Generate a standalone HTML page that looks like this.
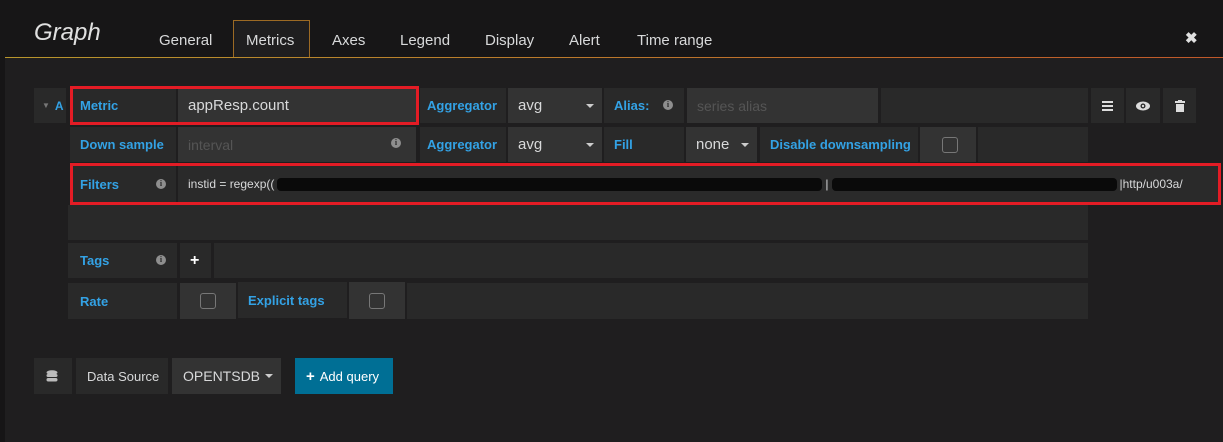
<!DOCTYPE html>
<html><head><style>
body{margin:0;width:1223px;height:442px;background:#161516;overflow:hidden;font-family:"Liberation Sans",sans-serif;position:relative}
.hd{position:absolute;left:0;top:0;width:1223px;height:57px;background:#171617}
.line{position:absolute;left:5px;top:57px;width:1218px;height:1px;background:linear-gradient(90deg,#b8962c,#c0582a)}
.body{position:absolute;left:5px;top:58px;width:1218px;height:384px;background:#1f1e1f}
.c{position:absolute;background:#292929;color:#d8d9da;font-size:14px;display:flex;align-items:center;box-sizing:border-box;padding-left:10px}
.l{color:#33a2e5;font-weight:bold;font-size:13px}
.in{background:#333}
.ph{color:#555}
.caret{position:absolute;right:8px;top:50%;margin-top:-2px;border-left:4px solid transparent;border-right:4px solid transparent;border-top:4px solid #ccc}
.info{position:absolute;width:10px;height:10px;border-radius:50%;background:#8e8e8e;color:#292929;font-size:8px;font-weight:bold;text-align:center;line-height:10px;font-family:"Liberation Serif",serif}
.cb{width:14px;height:14px;border:1px solid #777;border-radius:3px;margin-left:8px}
.red{position:absolute;border:3px solid #e31c25;box-sizing:border-box}
.tab{position:absolute;top:32px;color:#d8d9da;font-size:15px}
.rd{display:inline-block;height:13px;background:#0a0a0a;margin:0 3px;border-radius:4px}
</style></head><body>
<div class="hd"></div>
<div style="position:absolute;left:34px;top:19px;font-size:24px;font-style:italic;color:#e0e0e0">Graph</div>
<div style="position:absolute;left:233px;top:20px;width:77px;height:38px;border:1px solid #9c6a24;border-bottom:none;background:#1f1e1f;box-sizing:border-box"></div>
<div class="tab" style="left:159px">General</div>
<div class="tab" style="left:246px;top:32px">Metrics</div>
<div class="tab" style="left:332px">Axes</div>
<div class="tab" style="left:400px">Legend</div>
<div class="tab" style="left:485px">Display</div>
<div class="tab" style="left:569px">Alert</div>
<div class="tab" style="left:637px">Time range</div>
<div style="position:absolute;left:1185px;top:29px;color:#e0e0e0;font-size:15px;font-weight:bold">✖</div>
<div class="line"></div>
<div class="body"></div>

<div class="c" style="left:34px;top:88px;width:32px;height:35px;padding-left:8px;color:#33a2e5;font-weight:bold;font-size:12px"><span style="color:#777;font-size:8px;margin-right:5px">▼</span>A</div>
<div class="c l" style="left:70px;top:88px;width:106px;height:35px">Metric</div>
<div class="c in" style="left:178px;top:88px;width:238px;height:35px;font-size:15px">appResp.count</div>
<div class="c l" style="left:420px;top:88px;width:86px;height:35px;padding-left:7px">Aggregator</div>
<div class="c in" style="left:508px;top:88px;width:94px;height:35px;font-size:15px">avg<span class="caret"></span></div>
<div class="c l" style="left:604px;top:88px;width:80px;height:35px">Alias:<span class="info" style="left:59px;top:12px">i</span></div>
<div class="c in ph" style="left:687px;top:88px;width:191px;height:35px">series alias</div>
<div class="c" style="left:881px;top:88px;width:207px;height:35px"></div>
<div class="c" style="left:1091px;top:88px;width:33px;height:35px;padding-left:11px"><svg width="11" height="10"><rect y="0" width="11" height="2" fill="#ddd"/><rect y="4" width="11" height="2" fill="#ddd"/><rect y="8" width="11" height="2" fill="#ddd"/></svg></div>
<div class="c" style="left:1126px;top:88px;width:34px;height:35px;padding-left:10px"><svg width="14" height="10"><ellipse cx="7" cy="5" rx="7" ry="4.5" fill="#ddd"/><circle cx="7" cy="5" r="2.5" fill="#292929"/><circle cx="7" cy="5" r="1.2" fill="#ddd"/></svg></div>
<div class="c" style="left:1163px;top:88px;width:33px;height:35px;padding-left:12px"><svg width="10" height="12"><rect x="0" y="1" width="10" height="2" fill="#ddd"/><rect x="3" y="0" width="4" height="2" fill="#ddd"/><rect x="1" y="4" width="8" height="8" fill="#ddd"/></svg></div>
<div class="red" style="left:70px;top:86px;width:349px;height:39px"></div>

<div class="c l" style="left:70px;top:127px;width:106px;height:35px">Down sample</div>
<div class="c in ph" style="left:178px;top:127px;width:238px;height:35px">interval<span class="info" style="left:213px;top:11px">i</span></div>
<div class="c l" style="left:420px;top:127px;width:86px;height:35px;padding-left:7px">Aggregator</div>
<div class="c in" style="left:508px;top:127px;width:94px;height:35px;font-size:15px">avg<span class="caret"></span></div>
<div class="c l" style="left:604px;top:127px;width:80px;height:35px">Fill</div>
<div class="c in" style="left:686px;top:127px;width:71px;height:35px;font-size:15px">none<span class="caret"></span></div>
<div class="c l" style="left:760px;top:127px;width:158px;height:35px">Disable downsampling</div>
<div class="c in" style="left:920px;top:127px;width:56px;height:35px;padding-left:14px"><div class="cb" style="margin-left:8px"></div></div>
<div class="c" style="left:978px;top:127px;width:110px;height:35px"></div>

<div class="c l" style="left:70px;top:166px;width:106px;height:36px">Filters<span class="info" style="left:86px;top:13px">i</span></div>
<div class="c" style="left:178px;top:166px;width:1040px;height:36px;font-size:12px;white-space:nowrap;overflow:hidden;background:#2a2a2a">instid = regexp((<span class="rd" style="width:545px"></span>|<span class="rd" style="width:285px"></span>|http/u003a/</div>
<div class="red" style="left:70px;top:163px;width:1151px;height:42px"></div>

<div class="c" style="left:68px;top:205px;width:1020px;height:35px"></div>

<div class="c l" style="left:68px;top:243px;width:109px;height:35px;padding-left:12px">Tags<span class="info" style="left:88px;top:12px">i</span></div>
<div class="c" style="left:180px;top:243px;width:31px;height:35px;font-weight:bold;font-size:16px;color:#fff">+</div>
<div class="c" style="left:214px;top:243px;width:874px;height:35px"></div>

<div class="c l" style="left:68px;top:283px;width:109px;height:36px;padding-left:12px">Rate</div>
<div class="c in" style="left:180px;top:283px;width:56px;height:36px;padding-left:12px"><div class="cb"></div></div>
<div class="c l" style="left:238px;top:282px;width:109px;height:36px">Explicit tags</div>
<div class="c in" style="left:349px;top:282px;width:56px;height:37px;padding-left:12px"><div class="cb"></div></div>
<div class="c" style="left:407px;top:283px;width:681px;height:36px"></div>

<div class="c" style="left:34px;top:358px;width:38px;height:36px;padding-left:12px"><svg width="12" height="12"><ellipse cx="6" cy="2.5" rx="5.5" ry="2.3" fill="#bbb"/><rect x="0.5" y="4" width="11" height="3" rx="1.5" fill="#bbb"/><rect x="0.5" y="8" width="11" height="3.5" rx="1.7" fill="#bbb"/></svg></div>
<div class="c" style="left:76px;top:358px;width:92px;height:36px;font-size:13px;padding-left:11px">Data Source</div>
<div class="c in" style="left:172px;top:358px;width:109px;height:36px;font-size:14px;padding-left:11px">OPENTSDB<span class="caret"></span></div>
<div class="c" style="left:295px;top:358px;width:98px;height:36px;background:#006f95;color:#fff;font-size:13px;padding-left:11px"><b style="font-size:15px;margin-right:5px">+</b>Add query</div>
</body></html>
